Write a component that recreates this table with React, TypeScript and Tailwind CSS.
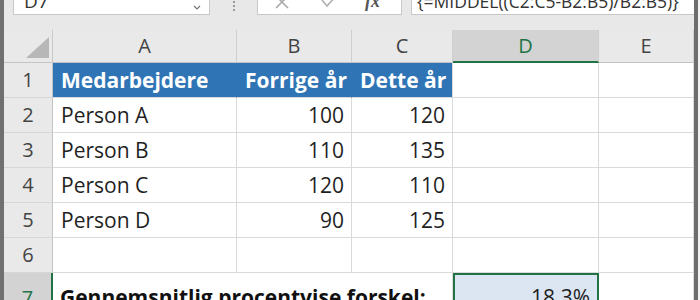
const cols = ["A", "B", "C", "D", "E"];

const rows: { n: number; a: string; b: string; c: string }[] = [
  { n: 2, a: "Person A", b: "100", c: "120" },
  { n: 3, a: "Person B", b: "110", c: "135" },
  { n: 4, a: "Person C", b: "120", c: "110" },
  { n: 5, a: "Person D", b: "90", c: "125" },
  { n: 6, a: "", b: "", c: "" },
];

const font = { fontFamily: '"Open Sans", "Liberation Sans", sans-serif' };

function RowHead({ n }: { n: number }) {
  return (
    <div className="h-[35px] flex items-center justify-center bg-[#e9e9e9] border-r border-b border-r-[#c3c3c3] border-b-[#d6d6d6] text-[20px] text-[#444]">
      {n}
    </div>
  );
}

function Cell({ children, right, className = "" }: { children?: React.ReactNode; right?: boolean; className?: string }) {
  return (
    <div
      className={`h-[35px] flex items-center leading-[35px] whitespace-nowrap overflow-hidden border-r border-b border-[#dadada] ${
        right ? "justify-end pr-[7px]" : "pl-[8px]"
      } ${className}`}
    >
      {children}
    </div>
  );
}

export default function App() {
  return (
    <div className="w-[700px] h-[300px] overflow-hidden flex bg-[#e8e8e8] text-[#1f1f1f]" style={font}>
      <div className="w-[4px] h-full bg-[#707070]" />
      <div className="w-[690px] flex flex-col">
        {/* Formula bar (cut off at the top) */}
        <div className="h-[30px] flex items-start shrink-0">
          <div className="-mt-[12px] ml-[9px] w-[197px] h-[27px] bg-white border border-[#c8c8c8] flex items-center justify-between pl-[10px] pr-[8px] text-[19px] text-[#333]">
            <span>D7</span>
            <svg width="8" height="6" viewBox="0 0 8 6" className="mt-[12px]">
              <path d="M1 1 L4 4 L7 1" fill="none" stroke="#777" strokeWidth="1.2" />
            </svg>
          </div>
          <div className="w-[47px] flex justify-center pt-[1px]">
            <div className="flex flex-col gap-[2px]">
              <span className="w-[2px] h-[2px] bg-[#9a9a9a]" />
              <span className="w-[2px] h-[2px] bg-[#9a9a9a]" />
              <span className="w-[2px] h-[2px] bg-[#9a9a9a]" />
            </div>
          </div>
          <div className="-mt-[12px] w-[145px] h-[27px] bg-white border border-[#c8c8c8] flex items-center text-[#9a9a9a]">
            <svg width="16" height="16" viewBox="0 0 16 16" className="ml-[16px]">
              <path d="M2 2 L14 14 M14 2 L2 14" stroke="#a8a8a8" strokeWidth="1.6" />
            </svg>
            <svg width="16" height="16" viewBox="0 0 16 16" className="ml-[31px]">
              <path d="M1 6 L6 12 L15 2" fill="none" stroke="#b0b0b0" strokeWidth="1.6" />
            </svg>
            <span className="ml-[28px] italic font-bold text-[18px] text-[#555]" style={{ fontFamily: '"Liberation Serif", serif' }}>
              fx
            </span>
          </div>
          <div className="-mt-[12px] ml-[9px] flex-1 h-[27px] bg-white border border-[#c8c8c8] border-r-0 flex items-center pl-[5px] text-[17.5px] text-[#333] whitespace-nowrap overflow-hidden">
            {"{=MIDDEL((C2:C5-B2:B5)/B2:B5)}"}
          </div>
        </div>

        {/* Sheet */}
        <div className="grid grid-cols-[49px_184px_115px_101px_146px_95px] bg-white text-[21px]">
          <div className="h-[33px] bg-[#e9e9e9] border-r border-b border-r-[#c9c9c9] border-b-[#c3c3c3] flex items-end justify-end pr-[3px] pb-[4px]">
            <svg width="23" height="21" viewBox="0 0 23 21">
              <polygon points="23,0 23,21 0,21" fill="#b7b7b7" />
            </svg>
          </div>
          {cols.map((c) => (
            <div
              key={c}
              className={`h-[33px] flex items-center justify-center text-[20px] border-r border-r-[#cfcfcf] ${
                c === "D"
                  ? "bg-[#d3d3d3] text-[#217346] border-b-2 border-b-[#217346]"
                  : "bg-[#e9e9e9] text-[#444] border-b border-b-[#c3c3c3]"
              }`}
            >
              {c}
            </div>
          ))}

          <RowHead n={1} />
          <Cell className="bg-[#2f75b5] border-r-[#2f75b5] text-white font-bold">Medarbejdere</Cell>
          <Cell className="bg-[#2f75b5] border-r-[#2f75b5] text-white font-bold">Forrige år</Cell>
          <Cell className="bg-[#2f75b5] text-white font-bold pl-[5px]">Dette år</Cell>
          <Cell />
          <Cell />

          {rows.map((r) => (
            <div key={r.n} className="contents">
              <RowHead n={r.n} />
              <Cell>{r.a}</Cell>
              <Cell right>{r.b}</Cell>
              <Cell right>{r.c}</Cell>
              <Cell />
              <Cell />
            </div>
          ))}

          <div className="h-[35px] flex items-center justify-center bg-[#d3d3d3] border-r-2 border-[#217346] text-[20px] text-[#217346] pt-[14px]">
            7
          </div>
          <div className="col-span-3 h-[35px] pl-[7px] pt-[7px] leading-[35px] font-bold text-[#111] whitespace-nowrap border-r border-[#dadada]">
            Gennemsnitlig procentvise forskel:
          </div>
          <div className="h-[35px] bg-[#dce6f2] border-2 border-[#217346] flex justify-end pr-[7px] pt-[5px] leading-[35px]">
            18.3%
          </div>
          <Cell />
        </div>
      </div>
      <div className="w-[4px] h-full bg-[#6e6e6e]" />
      <div className="w-[2px] h-full bg-[#f2f2f2]" />
    </div>
  );
}
